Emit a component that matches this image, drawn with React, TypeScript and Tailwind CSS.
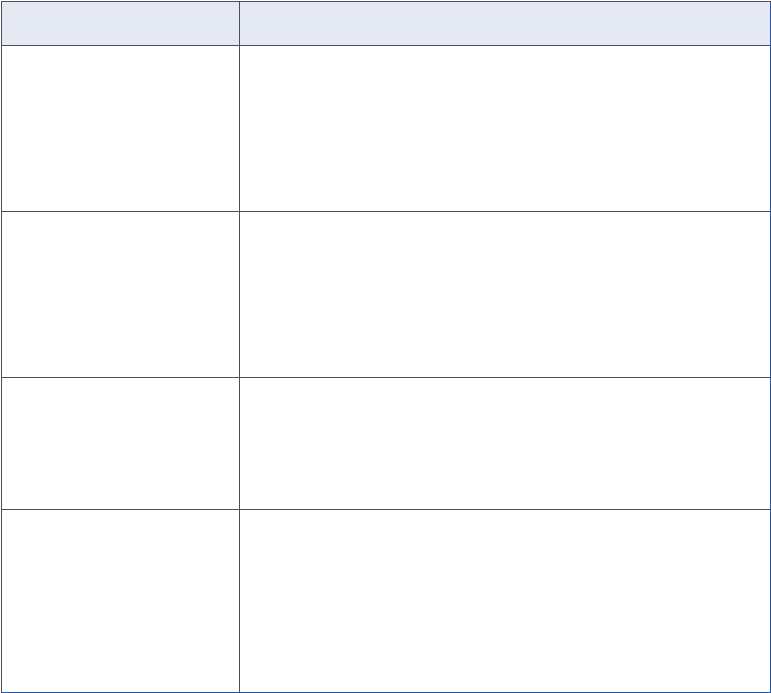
import React from 'react';

// Empty two-column table with a tinted header row
const rows: string[] = ['h-[166px]', 'h-[166px]', 'h-[132px]', 'h-[183px]'];

const App: React.FC = () => {
  return (
    <div className="min-h-screen bg-white pl-px pt-px font-['Liberation_Sans',sans-serif]">
      <div className="w-[770px] border-l border-t border-[#2a52a0]">
        <div className="grid grid-cols-[238px_531px] h-[44px] bg-[#e4e9f4]">
          <div className="border-r border-b border-[#2a52a0]" />
          <div className="border-r border-b border-[#2a52a0]" />
        </div>
        {rows.map((h, i) => (
          <div key={i} className={`grid grid-cols-[238px_531px] ${h}`}>
            <div className="border-r border-b border-[#2a52a0]" />
            <div className="border-r border-b border-[#2a52a0]" />
          </div>
        ))}
      </div>
    </div>
  );
};

export default App;
